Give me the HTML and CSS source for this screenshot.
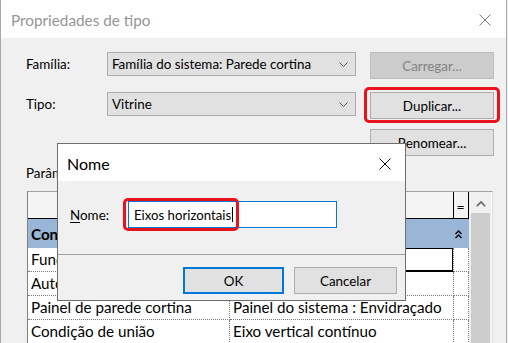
FILE: index.html
```html
<!DOCTYPE html>
<html lang="pt">
<head>
<meta charset="utf-8">
<title>Propriedades de tipo</title>
<link rel="stylesheet" href="styles.css">
</head>
<body>
<div class="win">
  <div class="titlebar">
    <span class="title">Propriedades de tipo</span>
    <svg class="close" width="12" height="12" viewBox="0 0 12 12"><path d="M0.5 0.5L11.5 11.5M11.5 0.5L0.5 11.5" stroke="#777" stroke-width="1" fill="none"/></svg>
  </div>
  <div class="content">
    <div class="row">
      <span class="label">Família:</span>
      <div class="combo"><span>Família do sistema: Parede cortina</span><svg class="chev" width="9" height="5" viewBox="0 0 9 5"><path d="M0.5 0.5L4.5 4.5L8.5 0.5" stroke="#555" stroke-width="1" fill="none"/></svg></div>
      <div class="btn disabled">Carregar...</div>
    </div>
    <div class="row row2">
      <span class="label">Tipo:</span>
      <div class="combo"><span>Vitrine</span><svg class="chev" width="9" height="5" viewBox="0 0 9 5"><path d="M0.5 0.5L4.5 4.5L8.5 0.5" stroke="#555" stroke-width="1" fill="none"/></svg></div>
      <div class="btn hl">Duplicar...</div>
    </div>
    <div class="row row3">
      <div class="btn">Renomear...</div>
    </div>
    <div class="params">Parâmetros</div>
    <div class="table">
      <div class="grid">
        <div class="hrow"><div class="hc name"></div><div class="hc val"></div><div class="hc eq">=</div></div>
        <div class="grow"><span class="gname">Construção</span><svg class="gchev" width="7" height="9" viewBox="0 0 7 9"><path d="M0.5 4L3.5 1L6.5 4M0.5 8L3.5 5L6.5 8" stroke="#000" stroke-width="1.3" fill="none"/></svg></div>
        <div class="drow"><div class="c name">Função</div><div class="c val edit"></div><div class="c eq"></div></div>
        <div class="drow"><div class="c name">Automático</div><div class="c val"></div><div class="c eq"></div></div>
        <div class="drow"><div class="c name">Painel de parede cortina</div><div class="c val">Painel do sistema : Envidraçado</div><div class="c eq"></div></div>
        <div class="drow"><div class="c name">Condição de união</div><div class="c val">Eixo vertical contínuo</div><div class="c eq"></div></div>
      </div>
      <div class="scroll">
        <svg class="up" width="10" height="6" viewBox="0 0 10 6"><path d="M0.8 5.2L5 1L9.2 5.2" stroke="#606060" stroke-width="1.6" fill="none"/></svg>
        <div class="thumb"></div>
      </div>
    </div>
  </div>

  <div class="dlg">
    <div class="dtitlebar">
      <span class="dtitle">Nome</span>
      <svg class="dclose" width="12" height="12" viewBox="0 0 12 12"><path d="M0.5 0.5L11.5 11.5M11.5 0.5L0.5 11.5" stroke="#111" stroke-width="1" fill="none"/></svg>
    </div>
    <div class="dbody">
      <div class="field">
        <span class="flabel"><u>N</u>ome:</span>
        <div class="input"><span class="itext">Eixos horizontais</span><span class="caret"></span><span class="ihl"></span></div>
      </div>
    </div>
    <div class="dfoot">
      <div class="btn dbtn ok">OK</div>
      <div class="btn dbtn cancel">Cancelar</div>
    </div>
  </div>
</div>
</body>
</html>
```

FILE: styles.css
```css
* { box-sizing: border-box; }
html, body { margin: 0; padding: 0; }
body {
  width: 508px;
  height: 343px;
  overflow: hidden;
  background: #f0f0f0;
  font-family: Lato, "Noto Sans", sans-serif;
  color: #000;
}
.win {
  position: relative;
  width: 507px;
  height: 343px;
  overflow: hidden;
  background: #f0f0f0;
  border-left: 1px solid #a8a8a8;
  border-right: 1px solid #a8a8a8;
}
.titlebar {
  height: 38px;
  background: #fff;
  display: flex;
  align-items: center;
  justify-content: space-between;
  padding: 0 15px 0 10px;
}
.title {
  font-size: 15.3px;
  color: #959595;
  margin-top: 1px;
}
.close { display: block; margin-top: 1px; }

.content {
  padding: 14px 0 0 25px;
}
.row {
  display: flex;
  align-items: flex-start;
  height: 27px;
}
.row2 { margin-top: 13px; }
.row3 { margin-top: 10px; padding-left: 344px; }
.label {
  width: 81px;
  font-size: 13.4px;
  line-height: 24px;
}
.combo {
  width: 249px;
  height: 24px;
  background: #e1e1e1;
  border: 1px solid #adadad;
  display: flex;
  align-items: center;
  justify-content: space-between;
  padding: 0 7px 0 4px;
  font-size: 13.4px;
}
.chev { display: block; }
.btn {
  width: 124px;
  height: 27px;
  background: #e1e1e1;
  border: 1px solid #adadad;
  display: flex;
  align-items: center;
  justify-content: center;
  font-size: 13.4px;
}
.row .btn { margin-left: 14px; }
.row3 .btn { margin-left: 0; }
.btn.disabled {
  background: #cccccc;
  border-color: #bfbfbf;
  color: #838383;
}
.btn.hl { position: relative; }
.btn.hl::after {
  content: "";
  position: absolute;
  left: -7px;
  top: -6px;
  right: -7px;
  bottom: -5px;
  border: 3px solid #e8141c;
  border-radius: 5px;
}
.params {
  margin-top: 8px;
  font-size: 13.4px;
  line-height: 18px;
  height: 18px;
}
.table {
  margin-top: 9px;
  margin-left: 1px;
  width: 466px;
  height: 170px;
  display: flex;
  border-top: 1px solid #a0a0a0;
  border-left: 1px solid #828282;
  border-right: 1px solid #e0e0e0;
  background: #fff;
  font-size: 15.2px;
}
.grid { width: 441px; }
.hrow {
  display: flex;
  height: 27px;
  background: #f4f4f4;
  border-bottom: 1px solid #000;
}
.name { width: 202px; }
.val { width: 224px; }
.eq { width: 15px; }
.hc.val { border-right: 1px solid #000; }
.hc.eq {
  border-right: 1px solid #000;
  font-size: 14px;
  text-align: center;
  line-height: 30px;
  padding-right: 1px;
}
.grow {
  height: 29px;
  background: #99b6d6;
  display: flex;
  align-items: center;
  justify-content: space-between;
  padding: 0 7px 0 3px;
}
.gname { font-weight: bold; }
.gchev { display: block; margin-top: 1px; }
.drow {
  display: flex;
  height: 24px;
}
.c {
  height: 24px;
  border-right: 1px dotted #7a7a7a;
  border-bottom: 1px dotted #7a7a7a;
  line-height: 23px;
  padding-left: 3px;
  white-space: nowrap;
  overflow: hidden;
}
.c.edit {
  box-shadow: inset 0 0 0 1px #000;
  border-bottom-style: solid;
  border-bottom-color: #000;
}
.scroll {
  width: 23px;
  background: #f0f0f0;
  border-right: 1px solid #fafafa;
  padding-left: 2px;
}
.up { display: block; margin: 9px 0 0 5px; }
.thumb {
  margin-top: 6px;
  width: 19px;
  height: 200px;
  background: #cdcdcd;
}

/* Nome dialog (overlay window) */
.dlg {
  position: absolute;
  left: 56px;
  top: 143px;
  width: 349px;
  height: 158px;
  border: 1px solid #6e6e6e;
  background: #f0f0f0;
  display: flex;
  flex-direction: column;
}
.dtitlebar {
  height: 37px;
  background: #fff;
  display: flex;
  align-items: center;
  justify-content: space-between;
  padding: 0 14px 0 9px;
}
.dtitle { font-size: 16px; margin-top: 1px; }
.dclose { display: block; margin-top: 2px; }
.dbody {
  height: 74px;
  padding: 20px 0 0 12px;
  border-bottom: 1px solid #a0a0a0;
}
.field {
  display: flex;
  align-items: center;
}
.flabel {
  width: 58px;
  font-size: 13.4px;
}
.flabel u { text-decoration-thickness: 1px; text-underline-offset: 2px; }
.input {
  position: relative;
  width: 209px;
  height: 27px;
  background: #fff;
  border: 1px solid #0078d7;
  display: flex;
  align-items: center;
  padding-left: 5px;
  font-size: 13.2px;
}
.caret {
  display: inline-block;
  width: 1px;
  height: 15px;
  background: #000;
  margin-left: 1px;
}
.ihl {
  position: absolute;
  left: -6px;
  top: -4px;
  width: 116px;
  height: 33px;
  border: 3px solid #e8141c;
  border-radius: 5px;
}
.dfoot {
  flex: 1;
  display: flex;
  justify-content: flex-end;
  gap: 10px;
  padding: 12px 8px 0 0;
}
.dbtn { font-size: 13.4px; }
.ok {
  width: 101px;
  border: 2px solid #0078d7;
}
.cancel { width: 103px; }
```
